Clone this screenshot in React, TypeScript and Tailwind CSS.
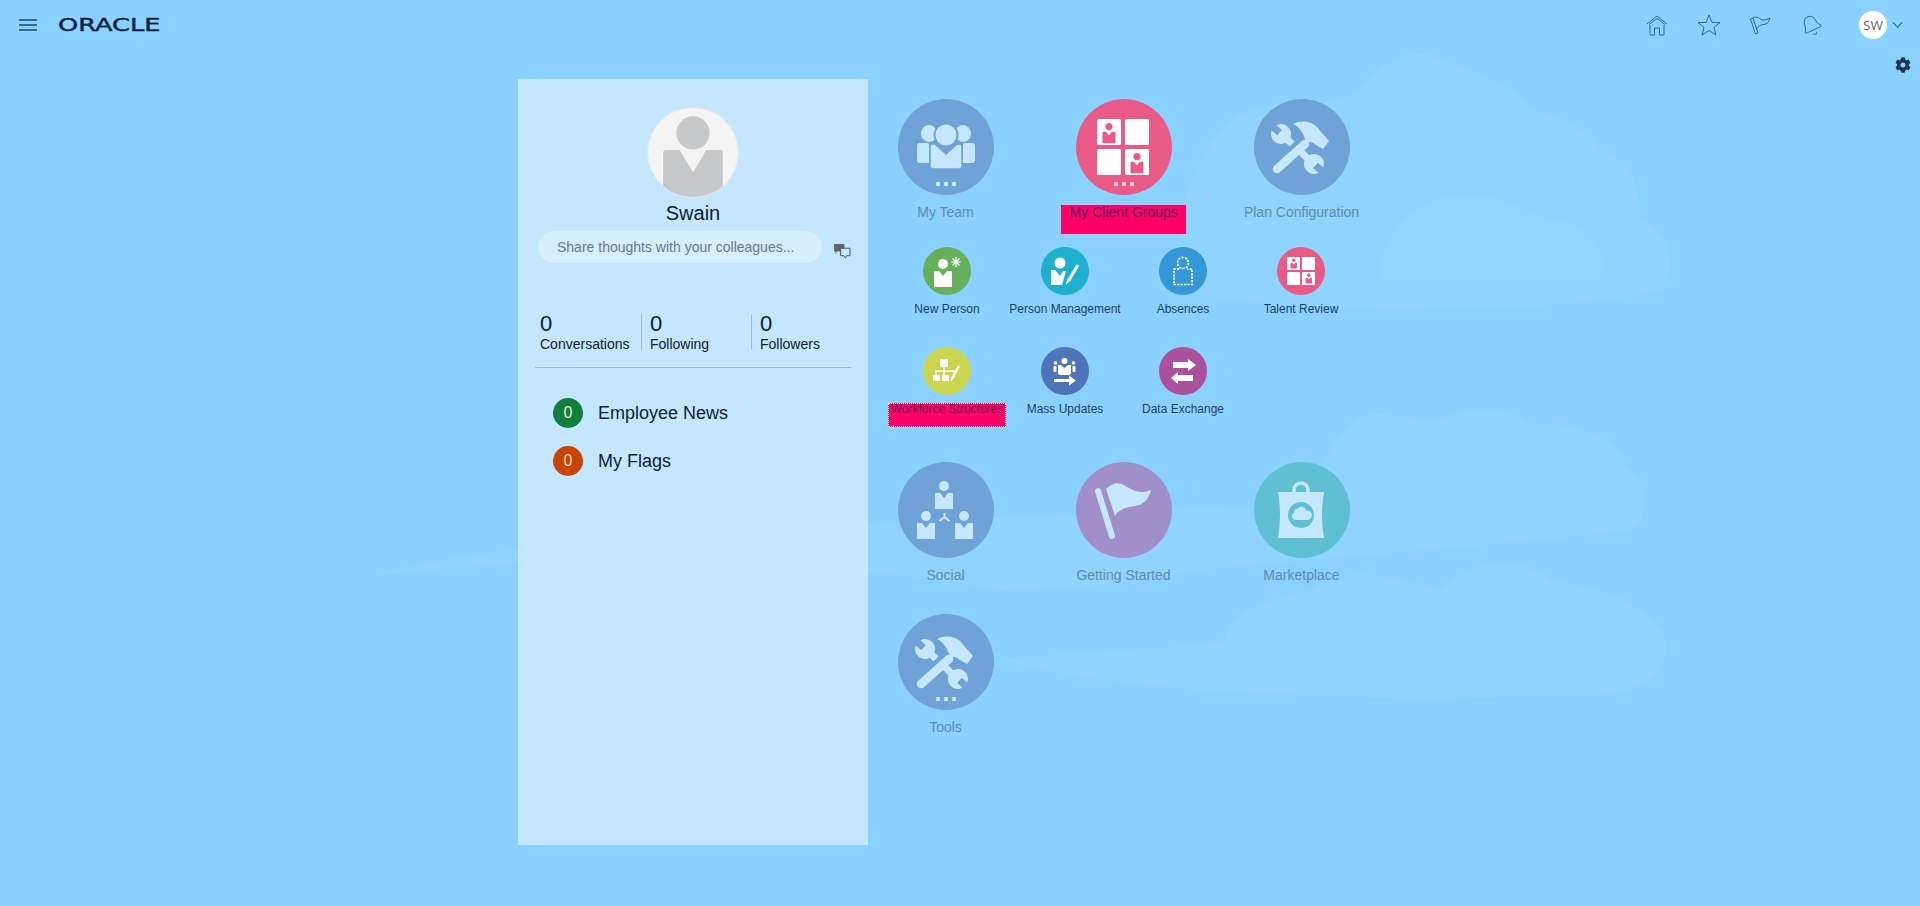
import { Bell } from "lucide-react";
import { FaCog } from "react-icons/fa";

const faded = "#c5e7ff";

const Dots = ({ fill }: { fill: string }) => (
  <g fill={fill}>
    <rect x="38" y="83" width="4" height="4" rx="1" />
    <rect x="46" y="83" width="4" height="4" rx="1" />
    <rect x="54" y="83" width="4" height="4" rx="1" />
  </g>
);

const Person = ({ x, y, s, fill }: { x: number; y: number; s: number; fill: string }) => (
  <g transform={`translate(${x} ${y}) scale(${s})`} fill={fill}>
    <circle cx="9" cy="5" r="5" />
    <path d="M1 12 h4 l4 5 4 -5 h4 q1 0 1 1 v15 h-18 v-15 q0 -1 1 -1 z" />
  </g>
);

const TeamIcon = () => (
  <svg viewBox="0 0 96 96" className="w-full h-full">
    <g fill={faded}>
      <ellipse cx="31" cy="34.500" rx="8" ry="8.500" />
      <ellipse cx="65" cy="34.500" rx="8" ry="8.500" />
      <path d="M22 44 h7 q2 0 2 2 v18 h-9 q-3 0 -3 -3 v-14 q0 -3 3 -3z" />
      <path d="M67 44 h7 q3 0 3 3 v14 q0 3 -3 3 h-9 v-18 q0 -2 2 -2z" />
    </g>
    <circle cx="48" cy="36" r="12.500" fill="#6fa3d8" />
    <circle cx="48" cy="36" r="10.500" fill={faded} />
    <path d="M32 47 q0 -2 2 -2 h3 l11 10 11 -10 h3 q2 0 2 2 v20 q0 3 -3 3 h-26 q-3 0 -3 -3 z" fill={faded} stroke="#6fa3d8" strokeWidth="1.500" />
    <Dots fill={faded} />
  </svg>
);

const GroupsIcon = ({ box, dots }: { box: number; dots?: boolean }) => (
  <svg viewBox={`0 0 ${box} ${box}`} className="w-full h-full">
    {box === 96 ? (
      <>
        <rect x="21" y="20" width="24" height="26" rx="1.500" fill="#fff" />
        <rect x="49" y="20" width="24" height="26" rx="1.500" fill="#fff" />
        <rect x="21" y="50" width="24" height="26" rx="1.500" fill="#fff" />
        <rect x="49" y="50" width="24" height="26" rx="1.500" fill="#fff" />
        <Person x={26.500} y={24} s={0.72} fill="#e95b87" />
        <Person x={54.500} y={54} s={0.72} fill="#e95b87" />
      </>
    ) : (
      <>
        <rect x="10" y="10" width="13" height="13" rx="1" fill="#fff" />
        <rect x="25" y="10" width="13" height="13" rx="1" fill="#fff" />
        <rect x="10" y="25" width="13" height="13" rx="1" fill="#fff" />
        <rect x="25" y="25" width="13" height="13" rx="1" fill="#fff" />
        <Person x={13.500} y={11.500} s={0.36} fill="#e95b87" />
        <Person x={28.500} y={26.500} s={0.36} fill="#e95b87" />
      </>
    )}
    {dots && <Dots fill="#f7c3d5" />}
  </svg>
);

const jaw = "M-9.300 -3.500 L-2 -3.500 L-2 3.500 L-9.300 3.500 A10 10 0 1 0 -9.300 -3.500 Z";

const ToolsIcon = ({ dots }: { dots?: boolean }) => (
  <svg viewBox="0 0 96 96" className="w-full h-full">
    <path d={jaw} fill={faded} transform="translate(27 35) rotate(42)" />
    <path d={jaw} fill={faded} transform="translate(60 65) rotate(222)" />
    <g fill="none" stroke={faded} strokeWidth="7">
      <path d="M31 38 L38 45" />
      <path d="M47 53 L56 62" />
    </g>
    <path d="M23 70 L51 45" stroke={faded} strokeWidth="8.500" strokeLinecap="round" fill="none" />
    <path d="M39 25 C47 21 56 22 62 27 L75 42 L69 50 L62 46 C58 42 54 43 52 43 C50 35 46 28 39 25 Z" fill={faded} />
    {dots && <Dots fill={faded} />}
  </svg>
);

const SocialIcon = () => (
  <svg viewBox="0 0 96 96" className="w-full h-full">
    <Person x={37} y={19} s={1} fill={faded} />
    <Person x={19} y={49} s={1} fill={faded} />
    <Person x={57} y={49} s={1} fill={faded} />
    <path d="M46.500 51 v4 M46.500 55 l-5 4 M46.500 55 l5 4" stroke={faded} strokeWidth="2.200" fill="none" />
  </svg>
);

const FlagIcon = () => (
  <svg viewBox="0 0 96 96" className="w-full h-full">
    <path d="M22 29 L36 74" stroke={faded} strokeWidth="6" strokeLinecap="round" />
    <path d="M30 27 C36 21 42 20 48 23 C55 27 62 33 75 28 C73 36 68 43 60 44 C52 45 44 46 39 54 Z" fill={faded} />
  </svg>
);

const BagIcon = () => (
  <svg viewBox="0 0 96 96" className="w-full h-full">
    <path d="M40 31 v-3 a7 7 0 0 1 14 0 v3" fill="none" stroke={faded} strokeWidth="3.500" />
    <path d="M24 30 H70 Q66 53 70 76 H24 Q28 53 24 30 Z" fill={faded} />
    <circle cx="47" cy="53" r="13" fill="#5fc0d3" />
    <path d="M41 58 a4 4 0 0 1 -1 -7.500 a4 4 0 0 1 4 -4 a4.500 4.500 0 0 1 8 2 a4.800 4.800 0 0 1 2 9.500 z" fill={faded} />
  </svg>
);

const NewPersonIcon = () => (
  <svg viewBox="0 0 48 48" className="w-full h-full">
    <Person x={11} y={12} s={1} fill="#fff" />
    <path d="M33 10 v10 M28 15 h10 M29.500 11.500 l7 7 M36.500 11.500 l-7 7" stroke="#fff" strokeWidth="1.200" />
  </svg>
);

const PersonMgmtIcon = () => (
  <svg viewBox="0 0 48 48" className="w-full h-full">
    <circle cx="19" cy="16" r="5.500" fill="#fff" />
    <path d="M10 23 h4 l5 6 3 -5 h3 l-4 14 h-11 z" fill="#fff" />
    <path d="M37 18 L28 33" stroke="#fff" strokeWidth="3" />
    <path d="M26.500 31.500 l3 2 -5 4.500 z" fill="#fff" />
  </svg>
);

const AbsenceIcon = () => (
  <svg viewBox="0 0 48 48" className="w-full h-full">
    <g fill="none" stroke="#fff" strokeWidth="1.700" strokeDasharray="2.200 1.200">
      <circle cx="24" cy="16" r="5.500" />
      <path d="M20 22 h-5 v15.500 h18 v-15.500 h-5" />
    </g>
  </svg>
);

const WorkforceIcon = () => (
  <svg viewBox="0 0 48 48" className="w-full h-full">
    <g fill="#fff">
      <rect x="17" y="12" width="8" height="8" />
      <rect x="10" y="28" width="7" height="6" />
      <rect x="19" y="28" width="7" height="6" />
    </g>
    <path d="M21 20 v8 M13 28 v-4 h18 v4" stroke="#fff" strokeWidth="1.400" fill="none" />
    <path d="M36 19 L29 32" stroke="#fff" strokeWidth="2.500" />
    <path d="M28 31 l2 1 -2.500 3.500 z" fill="#fff" />
  </svg>
);

const MassIcon = () => (
  <svg viewBox="0 0 48 48" className="w-full h-full">
    <g fill="#fff">
      <circle cx="23.500" cy="14" r="3" />
      <circle cx="14.500" cy="16" r="1.800" />
      <circle cx="32.500" cy="16" r="1.800" />
      <path d="M17 18 h3 l3.500 3 3.500 -3 h3 v8 q0 2 -2 2 h-9 q-2 0 -2 -2 z" />
      <rect x="12.500" y="19" width="3" height="6" rx="1" />
      <rect x="31.500" y="19" width="3" height="6" rx="1" />
      <path d="M13 32 h15 v-3.500 l7 5 -7 5 v-3.500 h-15 z" />
    </g>
  </svg>
);

const ExchangeIcon = () => (
  <svg viewBox="0 0 48 48" className="w-full h-full">
    <path d="M14 15 h15 v-3 l8 6 -8 6 v-3 h-15 z M34 28 h-15 v-3 l-7 6 7 6 v-3 h15 z" fill="#fff" />
  </svg>
);

type Tile = {
  label: string;
  color: string;
  icon: React.ReactNode;
  text?: string;
  mark?: string;
};

const BigTile = ({ label, color, icon, text, mark }: Tile) => (
  <div className="w-[156px] flex flex-col items-center">
    <div className="w-24 h-24 rounded-full" style={{ backgroundColor: color }}>
      {icon}
    </div>
    <div className="relative mt-[9px] h-4 w-full pr-px text-center text-sm leading-4 whitespace-nowrap" style={{ color: text ?? "#5f8cae" }}>
      {mark && <div className={mark} />}
      <span className="relative">{label}</span>
    </div>
  </div>
);

const SmallTile = ({ label, color, icon, text, mark }: Tile) => (
  <div className="w-[118px] flex flex-col items-center">
    <div className="w-12 h-12 rounded-full" style={{ backgroundColor: color }}>
      {icon}
    </div>
    <div className="relative mt-[6px] h-4 w-full text-center text-xs leading-4 whitespace-nowrap" style={{ color: text ?? "#1d3f5e" }}>
      {mark && <div className={mark} />}
      <span className="relative">{label}</span>
    </div>
  </div>
);

const Stat = ({ label, last }: { label: string; last?: boolean }) => (
  <div className={last ? "w-[90px] h-9 pl-2" : "w-[110px] h-9 pl-2 border-r border-[#a3bccd]"}>
    <div className="text-[22px] leading-5 text-[#0c1d2e]">0</div>
    <div className="text-sm leading-4 mt-[2px] text-[#10202f] whitespace-nowrap">{label}</div>
  </div>
);

const TopIcon = ({ children }: { children: React.ReactNode }) => (
  <svg viewBox="0 0 24 24" className="w-6 h-6" fill="none" stroke="#22699b" strokeWidth="1">
    {children}
  </svg>
);

const Clouds = () => (
  <svg viewBox="0 0 1920 906" className="absolute inset-0 w-full h-full">
    <g fill="#90d3ff">
      <path d="M1180 290 C1170 230 1190 150 1240 115 C1280 95 1330 110 1360 90 C1380 60 1420 45 1440 60 C1480 70 1520 90 1530 110 C1560 115 1590 130 1600 150 C1640 160 1640 200 1640 220 C1670 230 1680 270 1660 290 C1600 310 1300 320 1180 290 Z" />
      <path d="M1310 530 C1305 480 1330 440 1365 415 C1400 410 1420 425 1440 420 C1470 405 1510 405 1530 425 C1580 420 1620 440 1625 465 C1650 480 1650 520 1630 530 Z" />
      <path d="M1000 660 C1080 650 1180 650 1225 640 C1230 610 1270 600 1310 590 C1350 560 1400 580 1440 590 C1470 560 1520 555 1550 580 C1600 585 1660 610 1665 640 C1670 670 1650 690 1600 695 C1400 700 1150 700 1000 660 Z" />
      <path d="M370 575 C600 520 900 530 1210 505 C1300 520 1320 520 1640 530 C1500 545 1350 555 1200 570 C1100 590 1000 590 1000 590 C800 555 580 555 370 575 Z" />
    </g>
    <path d="M1380 280 C1380 230 1420 190 1470 195 C1510 195 1530 215 1550 220 C1590 220 1610 250 1600 280 Z" fill="#94d5ff" />
  </svg>
);

export default function App() {
  return (
    <div className="relative h-[906px] overflow-hidden bg-[#8bd1ff] font-['Liberation_Sans',Arial,sans-serif]">
      <Clouds />
      <header className="relative h-[50px] flex items-center pl-[19px]">
        <svg viewBox="0 0 18 12" className="w-[18px] h-3" stroke="#174a6d" strokeWidth="1.500">
          <path d="M0 1 H18 M0 6 H18 M0 11 H18" />
        </svg>
        <div className="ml-[21px] w-[100px] h-4 flex items-center">
          <span className="font-['DejaVu_Sans',sans-serif] text-[17px] leading-4 text-[#07233b] origin-left scale-x-[1.51] [-webkit-text-stroke:0.4px_#07233b]">
            ORACLE
          </span>
        </div>
        <div className="ml-auto flex items-center">
          <div className="w-[52px] flex justify-center">
            <TopIcon>
              <path d="M2 11 L12 3 L22 11 M4 11.500 L12 5.500 L20 11.500" />
              <path d="M5 12 V22 H9.500 V15 H14.500 V22 H19 V12" />
            </TopIcon>
          </div>
          <div className="w-[52px] flex justify-center">
            <TopIcon>
              <path d="M12 2 L15 9.500 L23 9.500 L17 14.500 L19 22 L12 17.500 L5 22 L7 14.500 L1 9.500 L9 9.500 Z" />
            </TopIcon>
          </div>
          <div className="w-[50px] flex justify-center">
            <TopIcon>
              <path d="M2.500 6 L5 5 L10 20 L7.500 21 Z" />
              <path d="M5 5 C9 2 12 7 15 7 C18 7 20 6 22 5 C21 9 19 11 16 11.500 C13 12 11 12 8.500 16" />
            </TopIcon>
          </div>
          <div className="w-[52px] flex justify-center text-[#22699b]">
            <Bell size={23} strokeWidth={1} className="-rotate-[25deg]" />
          </div>
          <div className="ml-[22px] w-7 h-7 rounded-full bg-white flex items-center justify-center font-['Open_Sans',sans-serif] text-[13.500px] text-[#666]">SW</div>
          <svg viewBox="0 0 12 8" className="ml-[5px] mr-[17px] w-[11px] h-2" fill="none" stroke="#245a85" strokeWidth="1.200">
            <path d="M1 1 L6 6.500 L11 1" />
          </svg>
        </div>
      </header>
      <FaCog className="absolute right-[9px] top-[57px] text-[#1b3a52]" size={16} />

      <main className="relative flex pl-[518px] pt-[29px]">
        <section className="w-[350px] h-[766px] bg-[#c4e7ff] flex flex-col pt-7">
          <div className="self-center w-[92px] h-[91px] rounded-full bg-[#f4f4f4] border border-[#dfe6ea] overflow-hidden">
            <svg viewBox="0 0 91 91" className="w-full h-full">
              <circle cx="45.500" cy="25.500" r="17" fill="#c6c8ca" />
              <path d="M15 46 q0 -3 3 -3 h14 l13.500 23 13.500 -23 h14 q3 0 3 3 v45 h-61 z" fill="#c6c8ca" />
            </svg>
          </div>
          <div className="text-center text-xl leading-6 text-[#0b1c2c] mt-[3px]">Swain</div>
          <div className="flex items-center mt-[6px] ml-5">
            <div className="w-[284px] h-8 rounded-full bg-[#d6eefe] pl-[19px] text-sm leading-8 text-[#687a88]">
              Share thoughts with your colleagues...
            </div>
            <svg viewBox="0 0 18 16" className="ml-3 mt-[9px] w-[17px] h-[15px]">
              <path d="M0 0 H11 V8 H3 L1.500 11 V8 H0 Z" fill="#5f6468" />
              <path d="M7 4.500 H17 V12.500 H13.500 L12 15 L10.500 12.500 H7 Z" fill="#c4e7ff" stroke="#46525c" strokeWidth="1" />
            </svg>
          </div>
          <div className="flex mt-[51px] ml-[14px]">
            <Stat label="Conversations" />
            <Stat label="Following" />
            <Stat label="Followers" last />
          </div>
          <div className="mt-[17px] ml-[17px] w-[316px] border-t border-[#a3bccd]" />
          <div className="mt-[30px] ml-[35px] flex flex-col gap-[18px]">
            <div className="flex items-center gap-[15px]">
              <div className="w-[30px] h-[30px] rounded-full bg-[#137f3f] flex items-center justify-center text-base text-[#e3f0d0]">0</div>
              <div className="text-lg text-[#0e2234]">Employee News</div>
            </div>
            <div className="flex items-center gap-[15px]">
              <div className="w-[30px] h-[30px] rounded-full bg-[#c94505] flex items-center justify-center text-base text-[#f6dcc5]">0</div>
              <div className="text-lg text-[#0e2234]">My Flags</div>
            </div>
          </div>
        </section>

        <section className="flex flex-col pt-5">
          <div className="flex gap-[22px]">
            <BigTile label="My Team" color="#6fa3d8" icon={<TeamIcon />} />
            <BigTile
              label="My Client Groups"
              color="#e95b87"
              icon={<GroupsIcon box={96} dots />}
              text="#5a2560"
              mark="absolute top-px left-[15px] w-[125px] h-[29px] bg-[#ff0066]"
            />
            <BigTile label="Plan Configuration" color="#6fa3d8" icon={<ToolsIcon />} />
          </div>
          <div className="flex mt-[27px] ml-5">
            <SmallTile label="New Person" color="#66b05c" icon={<NewPersonIcon />} />
            <SmallTile label="Person Management" color="#1eb0cc" icon={<PersonMgmtIcon />} />
            <SmallTile label="Absences" color="#3498d8" icon={<AbsenceIcon />} />
            <SmallTile label="Talent Review" color="#e95b87" icon={<GroupsIcon box={48} />} />
          </div>
          <div className="flex mt-[30px] ml-5">
            <SmallTile
              label="Workforce Structures"
              color="#c9d44f"
              icon={<WorkforceIcon />}
              text="#6a1558"
              mark="absolute top-[2px] left-0 w-[118px] h-6 bg-[#ff0066] border border-dotted border-white"
            />
            <SmallTile label="Mass Updates" color="#4f75b8" icon={<MassIcon />} />
            <SmallTile label="Data Exchange" color="#ab519c" icon={<ExchangeIcon />} />
          </div>
          <div className="flex gap-[22px] mt-[45px]">
            <BigTile label="Social" color="#6fa3d8" icon={<SocialIcon />} />
            <BigTile label="Getting Started" color="#a08fc9" icon={<FlagIcon />} />
            <BigTile label="Marketplace" color="#5fc0d3" icon={<BagIcon />} />
          </div>
          <div className="flex mt-[31px]">
            <BigTile label="Tools" color="#6fa3d8" icon={<ToolsIcon dots />} />
          </div>
        </section>
      </main>
    </div>
  );
}
